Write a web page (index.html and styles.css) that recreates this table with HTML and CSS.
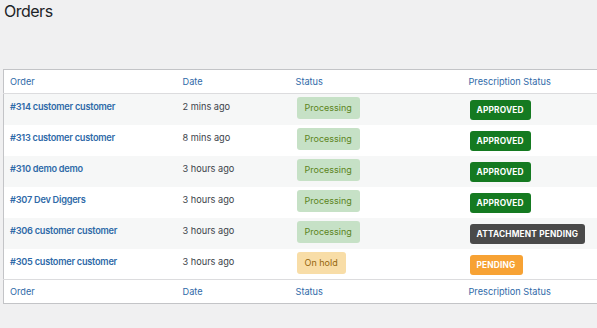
FILE: index.html
```html
<!DOCTYPE html>
<html lang="en">
<head>
    <meta charset="UTF-8">
    <title>Orders</title>
    <link rel="stylesheet" href="styles.css">
</head>
<body>
    <h1 class="page-title">Orders</h1>

    <div class="orders-wrap">
        <table class="orders-table">
            <colgroup>
                <col class="col-order">
                <col class="col-date">
                <col class="col-status">
                <col class="col-rx">
            </colgroup>
            <thead>
                <tr>
                    <th>Order</th>
                    <th>Date</th>
                    <th>Status</th>
                    <th>Prescription Status</th>
                </tr>
            </thead>
            <tbody>
                <tr>
                    <td><a href="#" class="order-link">#314 customer customer</a></td>
                    <td class="date">2 mins ago</td>
                    <td><mark class="order-status processing">Processing</mark></td>
                    <td><span class="rx-badge approved">Approved</span></td>
                </tr>
                <tr>
                    <td><a href="#" class="order-link">#313 customer customer</a></td>
                    <td class="date">8 mins ago</td>
                    <td><mark class="order-status processing">Processing</mark></td>
                    <td><span class="rx-badge approved">Approved</span></td>
                </tr>
                <tr>
                    <td><a href="#" class="order-link">#310 demo demo</a></td>
                    <td class="date">3 hours ago</td>
                    <td><mark class="order-status processing">Processing</mark></td>
                    <td><span class="rx-badge approved">Approved</span></td>
                </tr>
                <tr>
                    <td><a href="#" class="order-link">#307 Dev Diggers</a></td>
                    <td class="date">3 hours ago</td>
                    <td><mark class="order-status processing">Processing</mark></td>
                    <td><span class="rx-badge approved">Approved</span></td>
                </tr>
                <tr>
                    <td><a href="#" class="order-link">#306 customer customer</a></td>
                    <td class="date">3 hours ago</td>
                    <td><mark class="order-status processing">Processing</mark></td>
                    <td><span class="rx-badge attachment">Attachment Pending</span></td>
                </tr>
                <tr>
                    <td><a href="#" class="order-link">#305 customer customer</a></td>
                    <td class="date">3 hours ago</td>
                    <td><mark class="order-status on-hold">On hold</mark></td>
                    <td><span class="rx-badge pending">Pending</span></td>
                </tr>
            </tbody>
            <tfoot>
                <tr>
                    <th>Order</th>
                    <th>Date</th>
                    <th>Status</th>
                    <th>Prescription Status</th>
                </tr>
            </tfoot>
        </table>
    </div>
</body>
</html>
```

FILE: styles.css
```css
body {
    margin: 0;
    background: #f0f0f1;
    color: #3c434a;
    font-family: Inter, "Liberation Sans", sans-serif;
    font-size: 9.2px;
    overflow: hidden;
}

.page-title {
    margin: 0;
    padding: 1px 0 0 4px;
    font-size: 16px;
    font-weight: 400;
    letter-spacing: -0.5px;
    line-height: 20px;
    color: #1d2327;
}

.orders-wrap {
    margin-top: 48px;
    padding-left: 3px;
}

.orders-table {
    width: 640px;
    table-layout: fixed;
    border-collapse: collapse;
    background: #fff;
    border: 1px solid #c3c4c7;
}

.col-order { width: 173px; }
.col-date { width: 113px; }
.col-status { width: 173px; }

.orders-table th {
    text-align: left;
    font-weight: 400;
    color: #2f6aa8;
    height: 23px;
    padding: 0 6px;
    line-height: 15px;
    vertical-align: middle;
}

.orders-table thead th {
    border-bottom: 1px solid #dcdcde;
}

.orders-table tfoot th {
    border-top: 1px solid #dcdcde;
}

.orders-table td {
    height: 31px;
    padding: 5px 6px 0;
    box-sizing: border-box;
    line-height: 15px;
    vertical-align: top;
}

.orders-table tbody tr:nth-child(odd) {
    background: #f6f7f7;
}

.order-link {
    color: #2f6aa8;
    font-weight: 600;
    letter-spacing: -0.25px;
    text-decoration: none;
}

.date {
    color: #3c434a;
}

.order-status {
    display: inline-block;
    margin: -2px 0 0 1px;
    padding: 0 8px;
    height: 22px;
    line-height: 22px;
    border-radius: 3px;
    font-size: 9px;
}

.processing {
    background: #c6e1c6;
    color: #5b841b;
}

.on-hold {
    background: #f8dda7;
    color: #94660c;
}

.rx-badge {
    display: inline-block;
    margin: 1px 0 0 1px;
    padding: 0 7px;
    height: 20px;
    line-height: 20px;
    border-radius: 3px;
    font-size: 8.3px;
    font-weight: 700;
    letter-spacing: 0.2px;
    text-transform: uppercase;
    color: #fff;
}

.approved {
    background: #157a21;
}

.attachment {
    background: #4a4a4a;
}

.pending {
    background: #f7a234;
}
```
